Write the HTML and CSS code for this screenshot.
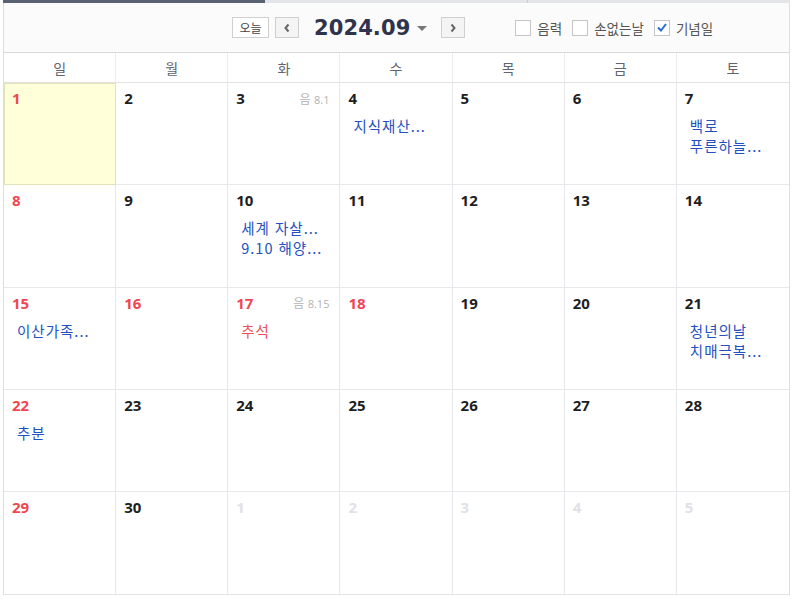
FILE: index.html
```html
<!DOCTYPE html>
<html lang="ko">
<head>
<meta charset="utf-8">
<link rel="stylesheet" href="styles.css">
</head>
<body>
<div class="cal">
  <div class="tabs"><div class="tab on"></div><div class="tab"></div><div class="tab last"></div></div>
  <div class="head">
    <div class="nav">
      <button class="btn today">오늘</button>
      <button class="btn arrow"><svg width="8" height="10" viewBox="0 0 8 10"><path d="M5.5 1.5 L2.5 5 L5.5 8.5" fill="none" stroke="#666" stroke-width="2"/></svg></button>
      <span class="title">2024.09</span>
      <svg class="caret" width="10" height="6" viewBox="0 0 10 6"><path d="M0 0 H10 L5 5 Z" fill="#777"/></svg>
      <button class="btn arrow"><svg width="8" height="10" viewBox="0 0 8 10"><path d="M2.5 1.5 L5.5 5 L2.5 8.5" fill="none" stroke="#666" stroke-width="2"/></svg></button>
    </div>
    <div class="opts">
      <label class="opt"><span class="box"></span>음력</label>
      <label class="opt"><span class="box"></span>손없는날</label>
      <label class="opt"><span class="box checked"><svg width="10" height="9" viewBox="0 0 10 9"><path d="M1 4.5 L4 7.5 L9 1" fill="none" stroke="#2a6fc9" stroke-width="2"/></svg></span>기념일</label>
    </div>
  </div>
  <div class="dow">
    <div>일</div><div>월</div><div>화</div><div>수</div><div>목</div><div>금</div><div>토</div>
  </div>
  <div class="grid">
    <div class="cell today-cell"><div class="top"><span class="num red">1</span></div></div>
    <div class="cell"><div class="top"><span class="num">2</span></div></div>
    <div class="cell"><div class="top"><span class="num">3</span><span class="lunar">음 <small>8.1</small></span></div></div>
    <div class="cell"><div class="top"><span class="num">4</span></div><div class="ev">지식재산...</div></div>
    <div class="cell"><div class="top"><span class="num">5</span></div></div>
    <div class="cell"><div class="top"><span class="num">6</span></div></div>
    <div class="cell"><div class="top"><span class="num">7</span></div><div class="ev">백로</div><div class="ev">푸른하늘...</div></div>

    <div class="cell"><div class="top"><span class="num red">8</span></div></div>
    <div class="cell"><div class="top"><span class="num">9</span></div></div>
    <div class="cell"><div class="top"><span class="num">10</span></div><div class="ev">세계 자살...</div><div class="ev">9.10 해양...</div></div>
    <div class="cell"><div class="top"><span class="num">11</span></div></div>
    <div class="cell"><div class="top"><span class="num">12</span></div></div>
    <div class="cell"><div class="top"><span class="num">13</span></div></div>
    <div class="cell"><div class="top"><span class="num">14</span></div></div>

    <div class="cell"><div class="top"><span class="num red">15</span></div><div class="ev">이산가족...</div></div>
    <div class="cell"><div class="top"><span class="num red">16</span></div></div>
    <div class="cell"><div class="top"><span class="num red">17</span><span class="lunar">음 <small>8.15</small></span></div><div class="ev hol">추석</div></div>
    <div class="cell"><div class="top"><span class="num red">18</span></div></div>
    <div class="cell"><div class="top"><span class="num">19</span></div></div>
    <div class="cell"><div class="top"><span class="num">20</span></div></div>
    <div class="cell"><div class="top"><span class="num">21</span></div><div class="ev">청년의날</div><div class="ev">치매극복...</div></div>

    <div class="cell"><div class="top"><span class="num red">22</span></div><div class="ev">추분</div></div>
    <div class="cell"><div class="top"><span class="num">23</span></div></div>
    <div class="cell"><div class="top"><span class="num">24</span></div></div>
    <div class="cell"><div class="top"><span class="num">25</span></div></div>
    <div class="cell"><div class="top"><span class="num">26</span></div></div>
    <div class="cell"><div class="top"><span class="num">27</span></div></div>
    <div class="cell"><div class="top"><span class="num">28</span></div></div>

    <div class="cell"><div class="top"><span class="num red">29</span></div></div>
    <div class="cell"><div class="top"><span class="num">30</span></div></div>
    <div class="cell"><div class="top"><span class="num other">1</span></div></div>
    <div class="cell"><div class="top"><span class="num other">2</span></div></div>
    <div class="cell"><div class="top"><span class="num other">3</span></div></div>
    <div class="cell"><div class="top"><span class="num other">4</span></div></div>
    <div class="cell"><div class="top"><span class="num other">5</span></div></div>
  </div>
</div>
</body>
</html>
```

FILE: styles.css
```css
html, body {
  margin: 0;
  padding: 0;
  background: #fff;
}
body {
  font-family: "Noto Sans CJK KR", "Noto Sans", sans-serif;
  color: #222;
}
.cal {
  margin-left: 3px;
  width: 787px;
  border-right: 1px solid #dedede;
  border-left: 1px solid #dedede;
  box-sizing: border-box;
}
.tabs {
  display: flex;
  height: 3px;
  margin-left: -1px;
  margin-right: -1px;
}
.tab {
  width: 262px;
  background: #e3e5e8;
  border-right: 1px solid #c9ccd1;
}
.tab.on {
  background: #586273;
  border-right: none;
}
.tab.last {
  flex: 1;
  border-right: none;
}
.head {
  background: #fcfbfb;
  border-bottom: 1px solid #d9d9d9;
  display: flex;
  align-items: center;
  padding-left: 228px;
  box-sizing: border-box;
  height: 50px;
}
.nav {
  display: flex;
  align-items: center;
}
.btn {
  height: 21px;
  border: 1px solid #cfcfcf;
  background: #fff;
  padding: 0;
  margin: 0;
  display: flex;
  align-items: center;
  justify-content: center;
  font-family: inherit;
  box-sizing: border-box;
}
.btn.today {
  width: 37px;
  font-size: 12px;
  color: #444;
  margin-right: 6px;
}
.btn.arrow {
  width: 24px;
  background: #f4f4f4;
}
.title {
  font-family: "DejaVu Sans", sans-serif;
  font-weight: bold;
  font-size: 21px;
  color: #30334d;
  margin-left: 15px;
  letter-spacing: 0.1px;
}
.caret {
  margin-left: 7px;
  margin-right: 14px;
  margin-top: 2px;
}
.opts {
  display: flex;
  align-items: center;
  margin-left: 50px;
}
.opt {
  display: flex;
  align-items: center;
  font-size: 13.5px;
  color: #555;
  margin-right: 10px;
}
.box {
  width: 16px;
  height: 16px;
  border: 1px solid #c6c6c6;
  background: #fff;
  box-sizing: border-box;
  margin-right: 6px;
  display: flex;
  align-items: center;
  justify-content: center;
}
.dow {
  display: grid;
  grid-template-columns: repeat(7, 1fr);
  height: 30px;
  border-bottom: 1px solid #e3e3e3;
  box-sizing: border-box;
}
.dow div {
  display: flex;
  align-items: center;
  justify-content: center;
  font-size: 14px;
  color: #5f6470;
  border-right: 1px solid #ececec;
  padding-top: 1px;
}
.dow div:last-child { border-right: none; }
.grid {
  display: grid;
  grid-template-columns: repeat(7, 1fr);
  grid-auto-rows: 102.25px;
  border-bottom: 1px solid #e3e3e3;
}
.cell {
  border-right: 1px solid #e8e8ec;
  border-bottom: 1px solid #e8e8ec;
  padding: 4px 10px 0 8px;
  box-sizing: border-box;
  overflow: hidden;
}
.cell:nth-child(7n) { border-right: none; }
.cell:nth-last-child(-n+7) { border-bottom: none; }
.today-cell {
  background: #ffffd9;
  outline: 1px solid #e2e2b8;
  outline-offset: -1px;
}
.top {
  display: flex;
  justify-content: space-between;
  align-items: center;
  height: 22px;
}
.num {
  font-family: "Open Sans", "Noto Sans", sans-serif;
  font-weight: bold;
  font-size: 15px;
  color: #1e1e1e;
}
.num.red { color: #f04650; }
.num.other { color: #e2e2e4; }
.lunar {
  font-size: 12px;
  color: #b4b4b4;
}
.lunar small {
  font-family: "Open Sans", sans-serif;
  font-size: 11px;
}
.ev {
  font-size: 14.5px;
  color: #2350c0;
  line-height: 20px;
  padding-left: 5px;
  white-space: nowrap;
  letter-spacing: 1px;
}
.top + .ev { margin-top: 7px; }
.ev.hol { color: #f0505a; }
```
